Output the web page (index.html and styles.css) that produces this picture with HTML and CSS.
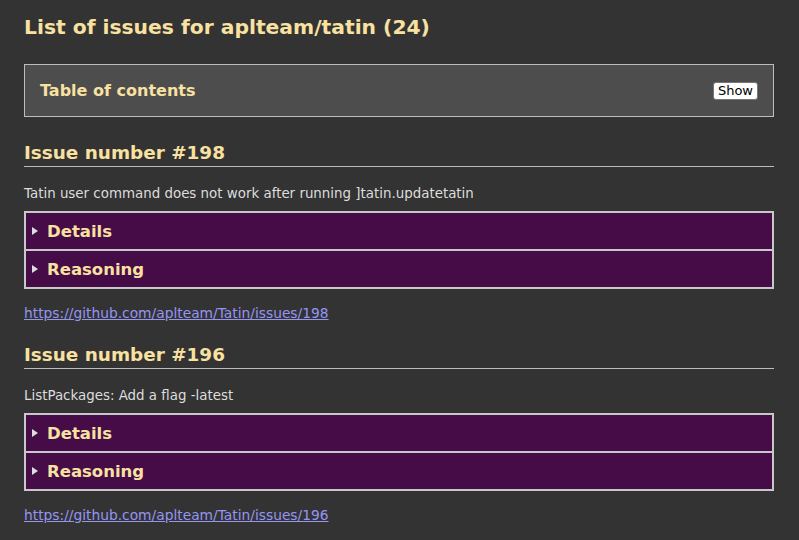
FILE: index.html
```html
<!DOCTYPE html>
<html lang="en">
<head>
<meta charset="utf-8">
<title>List of issues for aplteam/tatin</title>
<link rel="stylesheet" href="styles.css">
</head>
<body>
<h1 class="title">List of issues for aplteam/tatin (24)</h1>
<div class="toc">
  <span class="toc-title">Table of contents</span>
  <button class="toc-btn" type="button">Show</button>
</div>

<section class="issue">
  <h2 class="issue-head">Issue number #198</h2>
  <p class="issue-desc">Tatin user command does not work after running ]tatin.updatetatin</p>
  <div class="panels">
    <details class="panel"><summary>Details</summary></details>
    <details class="panel"><summary>Reasoning</summary></details>
  </div>
  <p class="issue-link"><a href="#">https://github.com/aplteam/Tatin/issues/198</a></p>
</section>

<section class="issue">
  <h2 class="issue-head">Issue number #196</h2>
  <p class="issue-desc">ListPackages: Add a flag -latest</p>
  <div class="panels">
    <details class="panel"><summary>Details</summary></details>
    <details class="panel"><summary>Reasoning</summary></details>
  </div>
  <p class="issue-link"><a href="#">https://github.com/aplteam/Tatin/issues/196</a></p>
</section>
</body>
</html>
```

FILE: styles.css
```css
html, body {
  background: #333333;
}
body {
  margin: 0;
  padding: 15px 25px 0 24px;
  font-family: "DejaVu Sans", Verdana, sans-serif;
  color: #dddddd;
}
.title {
  margin: 0 0 25px;
  font-size: 20.3px;
  line-height: 24px;
  font-weight: bold;
  color: #f8e1a1;
}
.toc {
  display: flex;
  align-items: center;
  justify-content: space-between;
  height: 51px;
  margin-bottom: 25px;
  padding: 0 15px;
  border: 1px solid #bdbdbd;
  background: #4d4d4d;
}
.toc-title {
  font-size: 16px;
  font-weight: bold;
  color: #f8e1a1;
}
.toc-btn {
  font-family: "DejaVu Sans", Verdana, sans-serif;
  font-size: 13px;
  line-height: 14px;
  padding: 1px 4px;
  background: #ffffff;
  color: #000000;
  border: 1px solid #767676;
  border-radius: 3px;
}
.issue-head {
  margin: 22px 0 0;
  padding-bottom: 2px;
  font-size: 18.4px;
  line-height: 22px;
  font-weight: bold;
  color: #f8e1a1;
  border-bottom: 1px solid #bdbdbd;
}
.issue-desc {
  margin: 18px 0 0;
  font-size: 13.4px;
  line-height: 17px;
  color: #dddddd;
}
.panels {
  margin-top: 9px;
  border: 2px solid #c8c8c8;
  background: #450c48;
}
.panel + .panel {
  border-top: 2px solid #c8c8c8;
}
.panel summary {
  display: flex;
  align-items: center;
  height: 36px;
  padding-left: 6px;
  font-size: 16.5px;
  font-weight: bold;
  color: #f8e1a1;
  cursor: pointer;
  list-style: none;
}
.panel summary::-webkit-details-marker {
  display: none;
}
.panel summary::before {
  content: "";
  width: 0;
  height: 0;
  margin-right: 9px;
  border-top: 4px solid transparent;
  border-bottom: 4px solid transparent;
  border-left: 6px solid #dddddd;
}
.issue-link {
  margin: 16px 0 0;
  font-size: 13.8px;
  line-height: 17px;
}
.issue-link a {
  color: #9595f2;
}
```
